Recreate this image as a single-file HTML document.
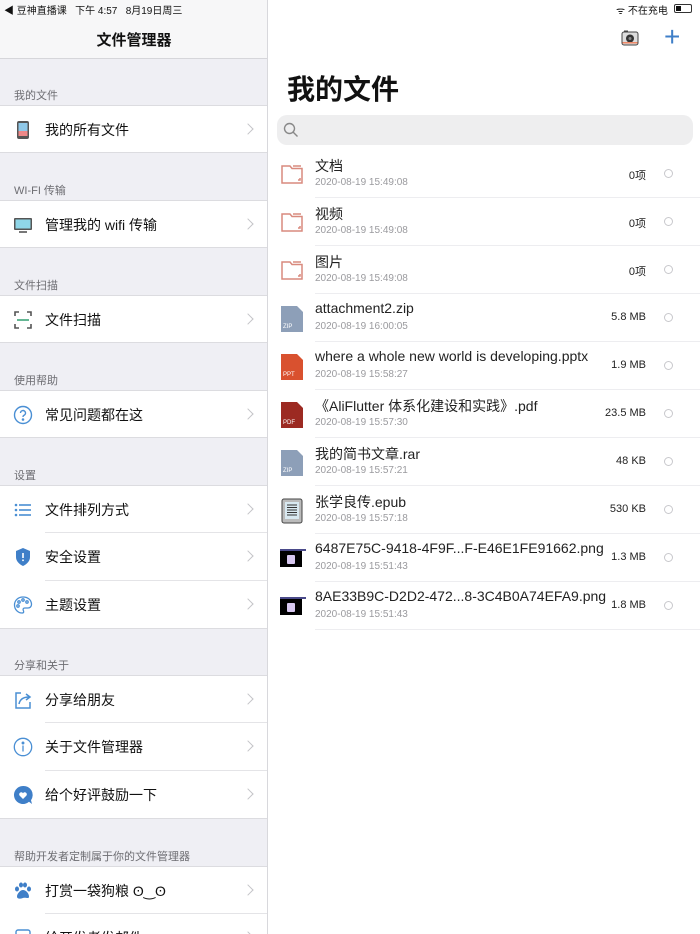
<!DOCTYPE html>
<html><head><meta charset="utf-8"><style>
*{margin:0;padding:0;box-sizing:border-box}
html,body{width:700px;height:934px;overflow:hidden}
body{font-family:"Liberation Sans","Noto Sans CJK SC",sans-serif;background:#fff;position:relative;color:#111}
.abs{position:absolute}
#side{position:absolute;left:0;top:0;width:268px;height:934px;background:#efeff4;border-right:1px solid #d8d8dc;overflow:hidden}
#nav{position:absolute;left:0;top:0;width:268px;height:59px;background:#f7f7f8;border-bottom:1px solid #d6d6da}
.lbl{position:absolute;left:14px;font-size:11px;color:#6d6d72}
.row{position:absolute;left:0;width:268px;height:48px;background:#fff}
.row .t{position:absolute;left:45px;top:14px;font-size:14px;color:#111}
.row .ch{position:absolute;right:16px;top:19px;width:8px;height:8px;border-right:1.5px solid #c4c4c8;border-top:1.5px solid #c4c4c8;transform:rotate(45deg)}
.row .ic{position:absolute;left:13px;top:14px;width:20px;height:20px}
.sep{position:absolute;left:45px;right:0;bottom:0;height:1px;background:#e4e4e7}
.bt{border-top:1px solid #dcdce0}.bb{border-bottom:1px solid #dcdce0}
.f{position:absolute;left:270px;width:430px;height:48px}
.f .n{position:absolute;left:45px;top:6px;font-size:14px;color:#222;white-space:nowrap}
.f .d{position:absolute;left:45px;top:27px;font-size:10px;color:#9a9a9e}
.f .s{position:absolute;right:54px;top:17px;font-size:11px;color:#222}
.f .c{position:absolute;left:394px;top:19px;width:9px;height:9px;border:1px solid #c8c8cc;border-radius:50%}
.f .l{position:absolute;left:45px;right:0;bottom:0;height:1px;background:#ededf0}
.f svg{position:absolute;left:10px;top:12px}
</style></head><body>
<div id="side">
<div id="nav">
<div class="abs" style="left:4px;top:2px;font-size:10px;color:#111">◀ 豆神直播课&nbsp;&nbsp;&nbsp;下午 4:57&nbsp;&nbsp;&nbsp;8月19日周三</div>
<div class="abs" style="left:0;width:268px;top:29px;text-align:center;font-size:15px;font-weight:bold">文件管理器</div>
</div>
<div class="lbl" style="top:87px">我的文件</div>
<div class="row bt bb" style="top:105px"><svg class="ic" viewBox="0 0 20 20"><rect x="4" y="1" width="12" height="18" rx="2" fill="#555"/><rect x="5.5" y="3" width="9" height="13" fill="#8fc8e8"/><rect x="5.5" y="11" width="9" height="5" fill="#e88"/></svg><div class="t">我的所有文件</div><div class="ch"></div></div>
<div class="lbl" style="top:182px">WI-FI 传输</div>
<div class="row bt bb" style="top:200px"><svg class="ic" viewBox="0 0 20 20"><rect x="1" y="3" width="18" height="12" rx="1" fill="#555"/><rect x="2.5" y="4.5" width="15" height="9" fill="#8fd6e8"/><rect x="6" y="16" width="8" height="2" fill="#777"/></svg><div class="t">管理我的 wifi 传输</div><div class="ch"></div></div>
<div class="lbl" style="top:277px">文件扫描</div>
<div class="row bt bb" style="top:295px"><svg class="ic" viewBox="0 0 20 20" fill="none" stroke="#555" stroke-width="1.6"><path d="M2 6V2h4M14 2h4v4M18 14v4h-4M6 18H2v-4"/><path d="M4 10h12" stroke="#3fa57a"/></svg><div class="t">文件扫描</div><div class="ch"></div></div>
<div class="lbl" style="top:372px">使用帮助</div>
<div class="row bt bb" style="top:390px"><svg class="ic" viewBox="0 0 20 20" fill="none" stroke="#4a8fd4" stroke-width="1.4"><circle cx="10" cy="10" r="8.5"/><path d="M7.5 8a2.5 2.5 0 1 1 3.5 2.3c-.8.4-1 1-1 1.7"/><circle cx="10" cy="14.5" r=".6" fill="#4a8fd4"/></svg><div class="t">常见问题都在这</div><div class="ch"></div></div>
<div class="lbl" style="top:467px">设置</div>
<div class="row bt" style="top:485px"><svg class="ic" viewBox="0 0 20 20" fill="#4a8fd4"><circle cx="3" cy="5" r="1.3"/><circle cx="3" cy="10" r="1.3"/><circle cx="3" cy="15" r="1.3"/><rect x="6" y="4.2" width="12" height="1.6"/><rect x="6" y="9.2" width="12" height="1.6"/><rect x="6" y="14.2" width="12" height="1.6"/></svg><div class="t">文件排列方式</div><div class="ch"></div><div class="sep"></div></div>
<div class="row" style="top:533px"><svg class="ic" viewBox="0 0 20 20"><path d="M10 1l7 3v6c0 4-3 7-7 9-4-2-7-5-7-9V4z" fill="#3f7fc8"/><rect x="9.2" y="6" width="1.6" height="5" fill="#fff"/><rect x="9.2" y="12.5" width="1.6" height="1.6" fill="#fff"/></svg><div class="t">安全设置</div><div class="ch"></div><div class="sep"></div></div>
<div class="row bb" style="top:581px"><svg class="ic" viewBox="0 0 20 20" fill="none" stroke="#4a8fd4" stroke-width="1.3"><path d="M10 2C5 2 1.5 5.5 1.5 10S5 18 9 18c2 0 2-1.5 1.3-2.5-.7-1 0-2.5 1.5-2.5H15c2 0 3.5-1.5 3.5-3.5C18.5 5 15 2 10 2z"/><circle cx="6" cy="7" r="1.2"/><circle cx="10" cy="5" r="1.2"/><circle cx="14" cy="7" r="1.2"/><circle cx="5" cy="11" r="1.2"/></svg><div class="t">主题设置</div><div class="ch"></div></div>
<div class="lbl" style="top:657px">分享和关于</div>
<div class="row bt" style="top:675px"><svg class="ic" viewBox="0 0 20 20" fill="none" stroke="#4a8fd4" stroke-width="1.5"><path d="M8 3H3v15h14v-6"/><path d="M6 14c1-5 5-7 10-7M13 4l4 3-4 3"/></svg><div class="t">分享给朋友</div><div class="ch"></div><div class="sep"></div></div>
<div class="row" style="top:723px"><svg class="ic" viewBox="0 0 20 20" fill="none" stroke="#4a8fd4" stroke-width="1.3"><circle cx="10" cy="10" r="8.7"/><path d="M10 8.5v6"/><circle cx="10" cy="6" r=".8" fill="#4a8fd4"/></svg><div class="t">关于文件管理器</div><div class="ch"></div><div class="sep"></div></div>
<div class="row bb" style="top:771px"><svg class="ic" viewBox="0 0 20 20"><path d="M10 1a9 9 0 1 0 6 15.7L19 19l-1-3.8A9 9 0 0 0 10 1z" fill="#3f7fc8"/><path d="M10 14l-3.5-3.5a2 2 0 0 1 3.5-2.3 2 2 0 0 1 3.5 2.3z" fill="#fff"/></svg><div class="t">给个好评鼓励一下</div><div class="ch"></div></div>
<div class="lbl" style="top:848px">帮助开发者定制属于你的文件管理器</div>
<div class="row bt" style="top:866px"><svg class="ic" viewBox="0 0 20 20" fill="#3f7fc8"><ellipse cx="4" cy="8" rx="2" ry="2.5"/><ellipse cx="8" cy="4" rx="2" ry="2.5"/><ellipse cx="12" cy="4" rx="2" ry="2.5"/><ellipse cx="16" cy="8" rx="2" ry="2.5"/><path d="M10 9c-3 0-6 4-6 6.5S7 18 10 17s6 1.5 6-1.5S13 9 10 9z"/></svg><div class="t">打赏一袋狗粮 ʘ‿ʘ</div><div class="ch"></div><div class="sep"></div></div>
<div class="row" style="top:914px"><svg class="ic" viewBox="0 0 20 20" fill="none" stroke="#4a8fd4" stroke-width="1.4"><rect x="3" y="2" width="14" height="16" rx="2"/></svg><div class="t">给开发者发邮件</div><div class="ch"></div></div>
</div>

<div class="abs" style="left:616px;top:2px;font-size:10px">ᯤ 不在充电</div>
<div class="abs" style="left:674px;top:4px;width:18px;height:9px;border:1px solid #333;border-radius:2px"><div style="width:5px;height:5px;margin:1px;background:#111"></div></div>
<svg class="abs" style="left:621px;top:29px" width="18" height="18" viewBox="0 0 18 18"><rect x="1" y="3" width="16" height="13" rx="2" fill="#ddd" stroke="#444"/><rect x="3" y="1.5" width="4" height="2" fill="#444"/><circle cx="9" cy="9.5" r="4" fill="#333"/><circle cx="9" cy="9.5" r="1.5" fill="#888"/><rect x="1.5" y="13" width="15" height="1.5" fill="#e86"/></svg>
<div class="abs" style="left:664px;top:20px;font-size:28px;color:#3f7fc8;font-weight:300;line-height:34px">+</div>
<div class="abs" style="left:287px;top:68px;font-size:28px;font-weight:bold">我的文件</div>
<div class="abs" style="left:277px;top:115px;width:416px;height:30px;border-radius:10px;background:#eeeeef"><svg style="position:absolute;left:6px;top:7px" width="16" height="16" viewBox="0 0 16 16" fill="none" stroke="#888" stroke-width="1.4"><circle cx="6.5" cy="6.5" r="5"/><path d="M10 10l4.5 4.5"/></svg></div>

<div class="f" style="top:150px"><svg width="24" height="24" viewBox="0 0 24 24" fill="none" stroke="#d98a7e" stroke-width="1.5"><path d="M2 4h8l2 2.5h10V21H2z"/><path d="M13 4h8"/><path d="M18 18h2v-2"/></svg><div class="n">文档</div><div class="d">2020-08-19 15:49:08</div><div class="s">0项</div><div class="c"></div><div class="l"></div></div>
<div class="f" style="top:198px"><svg width="24" height="24" viewBox="0 0 24 24" fill="none" stroke="#d98a7e" stroke-width="1.5"><path d="M2 4h8l2 2.5h10V21H2z"/><path d="M13 4h8"/><path d="M18 18h2v-2"/></svg><div class="n">视频</div><div class="d">2020-08-19 15:49:08</div><div class="s">0项</div><div class="c"></div><div class="l"></div></div>
<div class="f" style="top:246px"><svg width="24" height="24" viewBox="0 0 24 24" fill="none" stroke="#d98a7e" stroke-width="1.5"><path d="M2 4h8l2 2.5h10V21H2z"/><path d="M13 4h8"/><path d="M18 18h2v-2"/></svg><div class="n">图片</div><div class="d">2020-08-19 15:49:08</div><div class="s">0项</div><div class="c"></div><div class="l"></div></div>
<div class="f" style="top:294px"><svg width="24" height="26" viewBox="0 0 24 26"><path d="M1 0h16l6 6v20H1z" fill="#8d9fb8"/><text x="3" y="22" font-size="6" fill="#fff" font-family="Liberation Sans">ZIP</text></svg><div class="n">attachment2.zip</div><div class="d">2020-08-19 16:00:05</div><div class="s">5.8 MB</div><div class="c"></div><div class="l"></div></div>
<div class="f" style="top:342px"><svg width="24" height="26" viewBox="0 0 24 26"><path d="M1 0h16l6 6v20H1z" fill="#d9512f"/><text x="3" y="22" font-size="6" fill="#fff" font-family="Liberation Sans">PPT</text></svg><div class="n">where a whole new world is developing.pptx</div><div class="d">2020-08-19 15:58:27</div><div class="s">1.9 MB</div><div class="c"></div><div class="l"></div></div>
<div class="f" style="top:390px"><svg width="24" height="26" viewBox="0 0 24 26"><path d="M1 0h16l6 6v20H1z" fill="#9c2a22"/><text x="3" y="22" font-size="6" fill="#fff" font-family="Liberation Sans">PDF</text></svg><div class="n">《AliFlutter 体系化建设和实践》.pdf</div><div class="d">2020-08-19 15:57:30</div><div class="s">23.5 MB</div><div class="c"></div><div class="l"></div></div>
<div class="f" style="top:438px"><svg width="24" height="26" viewBox="0 0 24 26"><path d="M1 0h16l6 6v20H1z" fill="#8d9fb8"/><text x="3" y="22" font-size="6" fill="#fff" font-family="Liberation Sans">ZIP</text></svg><div class="n">我的简书文章.rar</div><div class="d">2020-08-19 15:57:21</div><div class="s">48 KB</div><div class="c"></div><div class="l"></div></div>
<div class="f" style="top:486px"><svg width="24" height="26" viewBox="0 0 24 26"><rect x="2" y="1" width="20" height="24" rx="2" fill="#bbb" stroke="#444"/><rect x="5" y="4" width="14" height="17" fill="#d8e8f0"/><path d="M7 7h10M7 9.5h10M7 12h10M7 14.5h10M7 17h10" stroke="#333"/></svg><div class="n">张学良传.epub</div><div class="d">2020-08-19 15:57:18</div><div class="s">530 KB</div><div class="c"></div><div class="l"></div></div>
<div class="f" style="top:534px"><svg width="26" height="24" viewBox="0 0 26 24"><rect x="0" y="3" width="26" height="18" fill="#000"/><rect x="0" y="3" width="26" height="2" fill="#4a4a8a"/><rect x="7" y="9" width="8" height="9" rx="1" fill="#d8c8f0"/><rect x="22" y="5" width="4" height="16" fill="#fff"/></svg><div class="n">6487E75C-9418-4F9F...F-E46E1FE91662.png</div><div class="d">2020-08-19 15:51:43</div><div class="s">1.3 MB</div><div class="c"></div><div class="l"></div></div>
<div class="f" style="top:582px"><svg width="26" height="24" viewBox="0 0 26 24"><rect x="0" y="3" width="26" height="18" fill="#000"/><rect x="0" y="3" width="26" height="2" fill="#4a4a8a"/><rect x="7" y="9" width="8" height="9" rx="1" fill="#d8c8f0"/><rect x="22" y="5" width="4" height="16" fill="#fff"/></svg><div class="n">8AE33B9C-D2D2-472...8-3C4B0A74EFA9.png</div><div class="d">2020-08-19 15:51:43</div><div class="s">1.8 MB</div><div class="c"></div><div class="l"></div></div>
</body></html>
